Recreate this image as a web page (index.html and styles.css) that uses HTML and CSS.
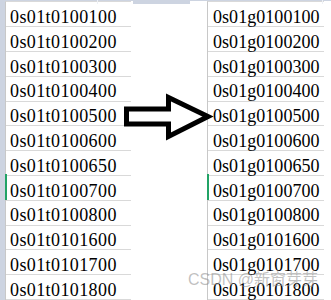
FILE: index.html
```html
<!DOCTYPE html>
<html>
<head>
<meta charset="utf-8">
<link rel="stylesheet" href="styles.css">
</head>
<body>
<div class="page">
  <div class="panel panel-left">
    <div class="strip"><span class="notch notch-left"></span></div>
    <div class="body">
      <div class="rowhead"></div>
      <div class="col col-left">
        <div class="cell">0s01t0100100</div>
        <div class="cell">0s01t0100200</div>
        <div class="cell">0s01t0100300</div>
        <div class="cell">0s01t0100400</div>
        <div class="cell">0s01t0100500</div>
        <div class="cell">0s01t0100600</div>
        <div class="cell">0s01t0100650</div>
        <div class="cell active">0s01t0100700</div>
        <div class="cell">0s01t0100800</div>
        <div class="cell">0s01t0101600</div>
        <div class="cell">0s01t0101700</div>
        <div class="cell">0s01t0101800</div>
      </div>
    </div>
  </div>
  <div class="gap"><div class="strip"></div></div>
  <div class="panel panel-right">
    <div class="strip"><span class="notch notch-right"></span></div>
    <div class="body">
      <div class="col col-right">
        <div class="cell">0s01g0100100</div>
        <div class="cell">0s01g0100200</div>
        <div class="cell">0s01g0100300</div>
        <div class="cell">0s01g0100400</div>
        <div class="cell">0s01g0100500</div>
        <div class="cell">0s01g0100600</div>
        <div class="cell">0s01g0100650</div>
        <div class="cell active">0s01g0100700</div>
        <div class="cell">0s01g0100800</div>
        <div class="cell">0s01g0101600</div>
        <div class="cell">0s01g0101700</div>
        <div class="cell">0s01g0101800</div>
      </div>
    </div>
  </div>
  <svg class="arrow" width="331" height="300" viewBox="0 0 331 300">
    <polygon points="126.5,109 168.5,109 168.5,97.5 208,116.5 168.5,136.5 168.5,124 126.5,124" fill="#fff" stroke="#000" stroke-width="5" stroke-linejoin="miter" stroke-miterlimit="10"/>
  </svg>
  <div class="watermark">CSDN @新窗芽芽</div>
</div>
</body>
</html>
```
FILE: styles.css
```css
html, body {
  margin: 0;
  padding: 0;
  background: #fff;
}
.page {
  position: relative;
  width: 331px;
  height: 300px;
  overflow: hidden;
  display: flex;
  font-family: "Liberation Serif", "Times New Roman", serif;
  color: #000;
}
.panel {
  display: flex;
  flex-direction: column;
}
.panel-left {
  width: 133px;
}
.gap {
  width: 57px;
}
.panel-right {
  flex: 1;
}
.strip {
  position: relative;
  height: 4px;
  background: #cdd4e1;
  margin-bottom: 1px;
}
.notch {
  position: absolute;
  top: 0;
  width: 1px;
  height: 4px;
  background: #eef1f6;
}
.notch-left { left: 97px; }
.notch-right { left: 132px; }
.body {
  display: flex;
}
.rowhead {
  width: 5px;
  background: #cdd4e1;
}
.col {
  border-top: 1px solid #d9d9d9;
  border-left: 1px solid #c8c8c8;
  font-size: 18px;
  line-height: 20px;
}
.col-left {
  width: 125px;
}
.col-right {
  margin-left: 17px;
  width: 116px;
}
.cell {
  position: relative;
  box-sizing: border-box;
  height: 24.8px;
  border-bottom: 1px solid #d9d9d9;
  padding-top: 4.5px;
  white-space: nowrap;
}
.col-left .cell {
  padding-left: 4px;
  letter-spacing: 0.4px;
}
.col-right .cell {
  padding-left: 5px;
  letter-spacing: 0.05px;
}
.cell.active::before {
  content: "";
  position: absolute;
  left: -1px;
  top: -2px;
  width: 2px;
  height: 26px;
  background: #21a366;
}
.arrow {
  position: absolute;
  left: 0;
  top: 0;
}
.watermark {
  position: absolute;
  right: 13px;
  bottom: 12px;
  font-family: "Liberation Sans", "Noto Sans CJK SC", sans-serif;
  font-size: 16px;
  line-height: 17px;
  color: rgba(140, 140, 140, 0.55);
  white-space: nowrap;
}
```
